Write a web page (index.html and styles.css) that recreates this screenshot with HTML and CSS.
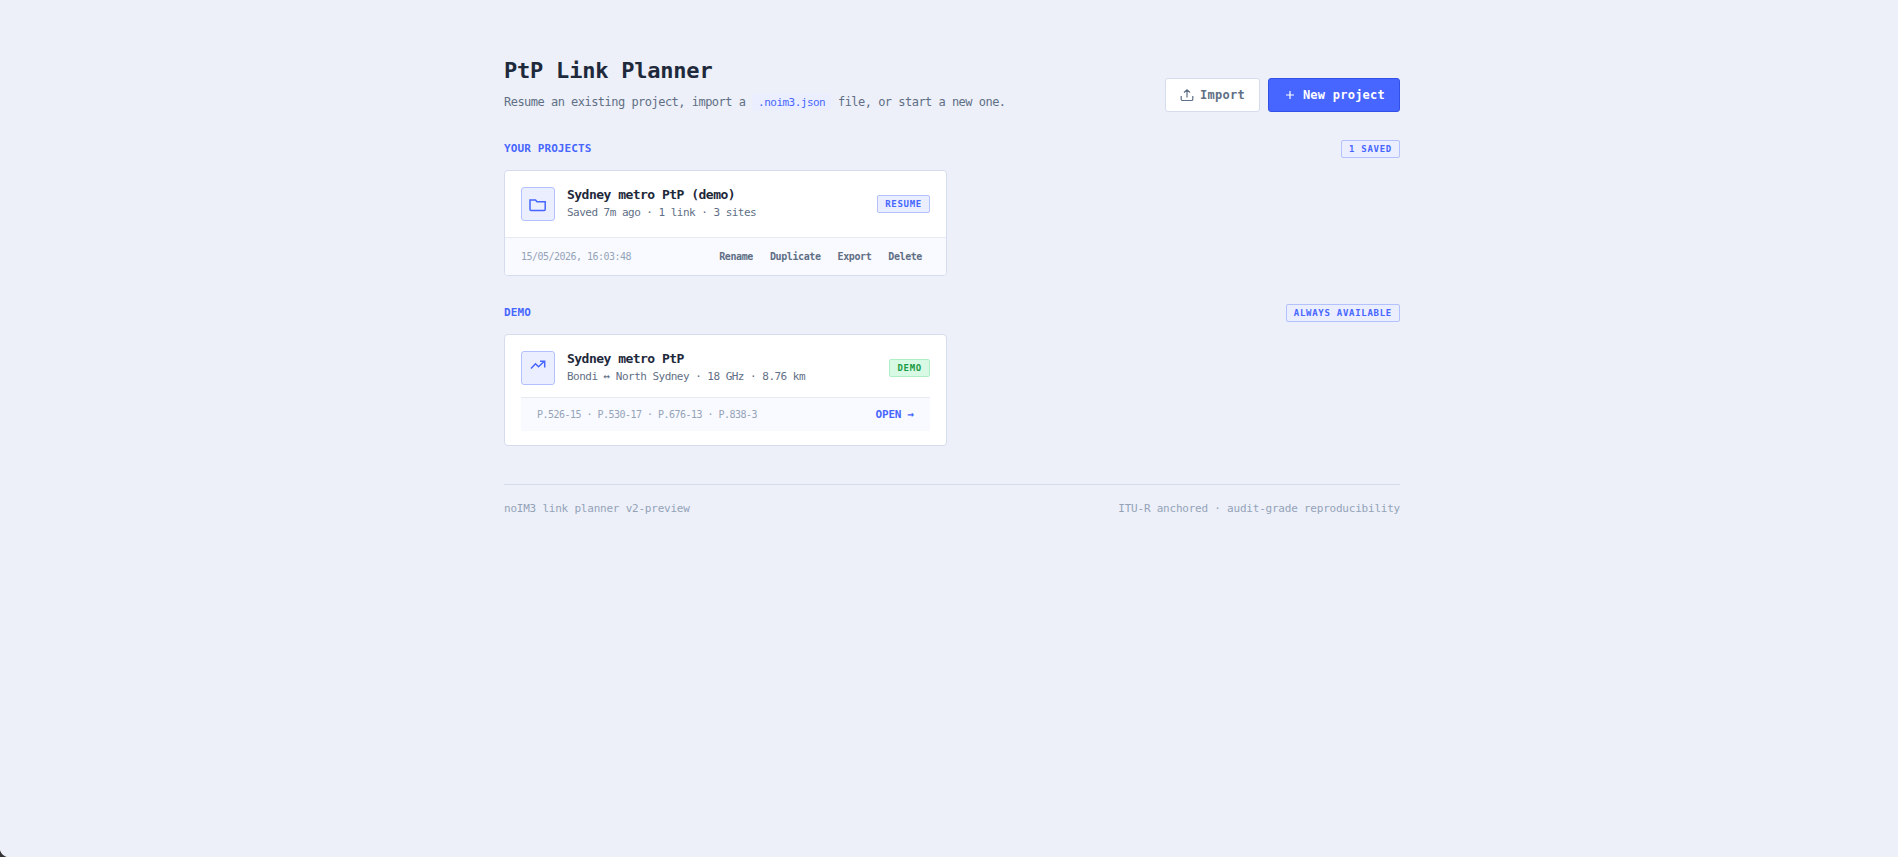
FILE: index.html
```html
<!DOCTYPE html>
<html lang="en">
<head>
<meta charset="utf-8">
<meta name="viewport" content="width=device-width, initial-scale=1">
<title>PtP Link Planner</title>
<link rel="stylesheet" href="styles.css">
</head>
<body>
<main class="page">
  <header class="page-header">
    <div class="intro">
      <h1 class="title">PtP Link Planner</h1>
      <p class="subtitle">Resume an existing project, import a <code class="chip">.noim3.json</code> file, or start a new one.</p>
    </div>
    <div class="actions">
      <button class="button" type="button">
        <svg class="button-icon" viewBox="0 0 14 14" aria-hidden="true"><path d="M7 9.5V1.800M4 4.500l3-2.800 3 2.800M1.200 8v3.200c0 .8.5 1.300 1.300 1.300h9c.8 0 1.300-.5 1.300-1.300V8"/></svg>
        Import
      </button>
      <button class="button button-primary" type="button">
        <svg class="button-icon" viewBox="0 0 14 14" aria-hidden="true"><path d="M7 3v8M3 7h8"/></svg>
        New project
      </button>
    </div>
  </header>

  <section class="section">
    <div class="section-head">
      <h2 class="section-title">YOUR PROJECTS</h2>
      <span class="badge">1 SAVED</span>
    </div>
    <div class="grid">
      <article class="card">
        <div class="card-main">
          <span class="tile"><svg class="tile-icon" viewBox="0 0 18 18" aria-hidden="true"><path d="M1 5h5.500l1.500 1.700h8.200v7.800c0 .6-.4 1-1 1H2c-.6 0-1-.4-1-1z"/></svg></span>
          <div class="card-text">
            <h3 class="card-title">Sydney metro PtP (demo)</h3>
            <p class="card-meta">Saved 7m ago · 1 link · 3 sites</p>
          </div>
          <span class="badge">RESUME</span>
        </div>
        <div class="card-foot">
          <time class="date" datetime="2026-05-15T16:03:48">15/05/2026, 16:03:48</time>
          <div class="card-actions">
            <button class="text-button" type="button">Rename</button>
            <button class="text-button" type="button">Duplicate</button>
            <button class="text-button" type="button">Export</button>
            <button class="text-button" type="button">Delete</button>
          </div>
        </div>
      </article>
    </div>
  </section>

  <section class="section">
    <div class="section-head">
      <h2 class="section-title">DEMO</h2>
      <span class="badge">ALWAYS AVAILABLE</span>
    </div>
    <div class="grid">
      <article class="card card-demo">
        <div class="card-main">
          <span class="tile"><svg class="tile-icon" viewBox="0 0 18 18" aria-hidden="true"><path d="M2 9.500l4.500-4.700 3 3 5.800-5.500M11 2.200h4.700v6.300"/></svg></span>
          <div class="card-text">
            <h3 class="card-title">Sydney metro PtP</h3>
            <p class="card-meta">Bondi ↔ North Sydney · 18 GHz · 8.76 km</p>
          </div>
          <span class="badge badge-green">DEMO</span>
        </div>
        <div class="strip">
          <span class="standards">P.526-15 · P.530-17 · P.676-13 · P.838-3</span>
          <a class="open" href="#open">OPEN →</a>
        </div>
      </article>
    </div>
  </section>

  <footer class="page-footer">
    <span>noIM3 link planner v2-preview</span>
    <span>ITU-R anchored · audit-grade reproducibility</span>
  </footer>
</main>
<div class="corner" aria-hidden="true"></div>
</body>
</html>
```
FILE: styles.css
```css
* { box-sizing: border-box; }

body {
  margin: 0;
  min-height: 100vh;
  padding-left: 6px;
  background: #edf0f9;
  color: #1e293b;
  font-family: "DejaVu Sans Mono", monospace;
  font-size: 13px;
  letter-spacing: -0.04em;
}

h1, h2, h3, p { margin: 0; }
button { font-family: inherit; cursor: pointer; }

.page {
  max-width: 960px;
  margin: 0 auto;
  padding: 57px 32px 32px;
}

.page-header {
  display: flex;
  flex-wrap: wrap;
  align-items: flex-end;
  justify-content: space-between;
  gap: 16px;
}

.title {
  font-size: 22px;
  line-height: 28px;
  letter-spacing: -0.01em;
}

.subtitle {
  margin-top: 7px;
  color: #5f6f85;
  font-size: 12px;
  line-height: 20px;
}

.chip {
  padding: 2px 6px;
  border-radius: 3px;
  background: #eaeeff;
  color: #4766ff;
  font-family: inherit;
  font-size: 11px;
  line-height: 1;
}

.actions { display: flex; gap: 8px; }

.button {
  display: inline-flex;
  align-items: center;
  gap: 6px;
  height: 34px;
  padding: 0 14px;
  border: 1px solid #d5dcee;
  border-radius: 3px;
  background: #fff;
  color: #5f6f85;
  font-size: 12px;
  font-weight: 700;
  letter-spacing: 0.02em;
}

.button-primary {
  border-color: #3350e6;
  background: #4766ff;
  color: #fff;
}

.button-icon {
  width: 14px;
  height: 14px;
  fill: none;
  stroke: currentColor;
  stroke-width: 1.2;
}

.section { margin-top: 28px; }

.section-head {
  display: flex;
  align-items: center;
  justify-content: space-between;
  margin-bottom: 12px;
}

.section-title {
  color: #4766ff;
  font-size: 11px;
  line-height: 16px;
  letter-spacing: 0.01em;
}

.badge {
  padding: 2px 7px;
  border: 1px solid #b4c1ff;
  border-radius: 2px;
  background: #eaeeff;
  color: #4766ff;
  font-size: 9px;
  font-weight: 700;
  line-height: 12px;
  letter-spacing: 0.08em;
  white-space: nowrap;
}

.badge-green {
  border-color: #aef0c4;
  background: #d8fae4;
  color: #1c9a45;
}

.grid {
  display: grid;
  grid-template-columns: repeat(auto-fill, minmax(340px, 1fr));
  gap: 10px;
}

.card {
  overflow: hidden;
  border: 1px solid #d5dcee;
  border-radius: 4px;
  background: #fff;
}

.card-main {
  display: flex;
  align-items: center;
  gap: 12px;
  padding: 16px;
}

.tile {
  display: grid;
  place-items: center;
  width: 34px;
  height: 34px;
  border: 1px solid #b4c1ff;
  border-radius: 3px;
  background: #eaeeff;
}

.tile-icon {
  width: 18px;
  height: 18px;
  fill: none;
  stroke: #4766ff;
  stroke-width: 1.5;
}

.card-text { flex: 1; min-width: 0; }

.card-title { font-size: 13px; line-height: 16px; }

.card-meta {
  margin-top: 2px;
  color: #5f6f85;
  font-size: 11px;
  line-height: 16px;
}

.card-foot, .strip {
  display: flex;
  align-items: center;
  justify-content: space-between;
  background: #f9faff;
  border-top: 1px solid #e6eaf4;
}

.card-foot { padding: 7px 16px; }

.date {
  color: #94a3b8;
  font-size: 10px;
}

.card-actions { display: flex; gap: 1px; }

.text-button {
  height: 23px;
  padding: 0 8px;
  border: 0;
  background: transparent;
  color: #5f6f85;
  font-size: 10px;
  font-weight: 700;
  letter-spacing: -0.04em;
}

.card-demo { padding: 16px 16px 14px; }
.card-demo .card-main { padding: 0 0 12px; }

.strip { height: 34px; padding: 0 16px; }

.standards { color: #94a3b8; font-size: 10px; }

.open {
  color: #4766ff;
  font-size: 11px;
  font-weight: 700;
  letter-spacing: -0.02em;
  text-decoration: none;
}

.page-footer {
  display: flex;
  flex-wrap: wrap;
  justify-content: space-between;
  gap: 8px;
  margin-top: 38px;
  padding-top: 16px;
  border-top: 1px solid #d5dcee;
  color: #94a3b8;
  font-size: 11px;
  line-height: 16px;
  letter-spacing: -0.02em;
}

.corner {
  position: fixed;
  bottom: 0;
  left: 0;
  width: 10px;
  height: 10px;
  background: radial-gradient(circle at 100% 0, transparent 10px, #333 11px);
}
```
